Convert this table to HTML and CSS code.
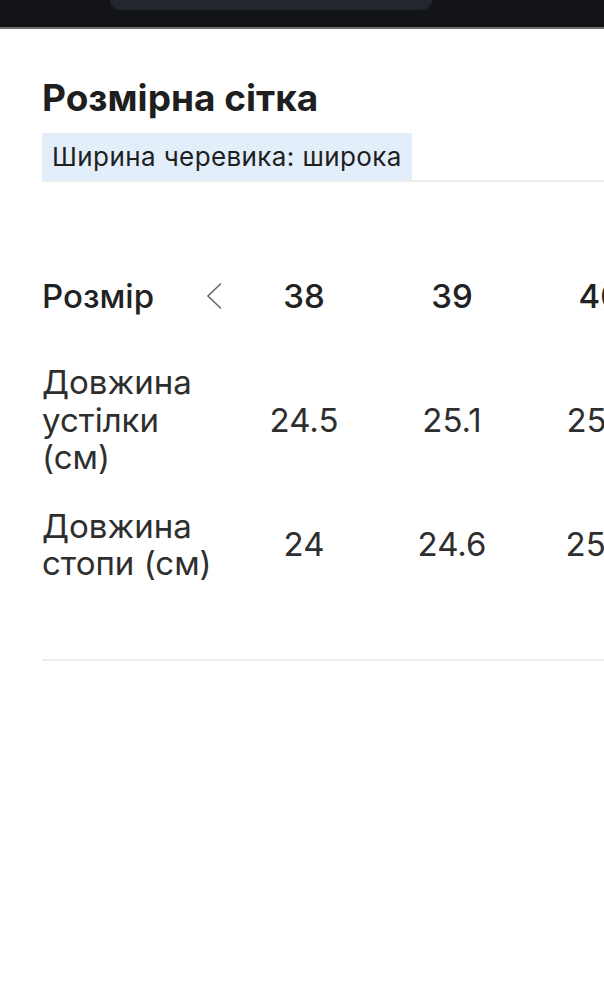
FILE: index.html
```html
<!DOCTYPE html>
<html lang="uk">
<head>
<meta charset="utf-8">
<title>Розмірна сітка</title>
<link rel="stylesheet" href="styles.css">
</head>
<body>
  <div class="topbar">
    <div class="notch"></div>
  </div>
  <div class="topline"></div>
  <main class="content">
    <h1 class="title">Розмірна сітка</h1>
    <div class="tag-row">
      <span class="tag">Ширина черевика: широка</span>
    </div>
    <div class="table-wrap">
      <div class="row head">
        <div class="label">
          <span>Розмір</span>
          <svg class="chev" width="20" height="28" viewBox="0 0 20 28" aria-hidden="true">
            <path d="M17 1.5 L4 14 L17 26.5" fill="none" stroke="#6a6a6a" stroke-width="1.6"/>
          </svg>
        </div>
        <div class="cell">38</div>
        <div class="cell">39</div>
        <div class="cell">40</div>
      </div>
      <div class="row data r1">
        <div class="label">Довжина устілки (см)</div>
        <div class="cell">24.5</div>
        <div class="cell">25.1</div>
        <div class="cell">25.7</div>
      </div>
      <div class="row data r2">
        <div class="label">Довжина стопи (см)</div>
        <div class="cell">24</div>
        <div class="cell">24.6</div>
        <div class="cell">25.2</div>
      </div>
    </div>
    <div class="bottom-rule"></div>
  </main>
</body>
</html>
```
FILE: styles.css
```css
html, body {
  margin: 0;
  padding: 0;
  background: #ffffff;
  overflow: hidden;
}
body {
  width: 604px;
  font-family: "Inter", "Noto Sans", "Liberation Sans", sans-serif;
  color: #262626;
}
.topbar {
  height: 27px;
  background: #131418;
  display: flex;
  justify-content: flex-start;
  overflow: hidden;
}
.notch {
  margin-left: 110px;
  width: 322px;
  height: 10px;
  background: #23262e;
  border-radius: 0 0 22px 22px;
}
.topline {
  height: 2px;
  background: #707070;
}
.content {
  padding-left: 42px;
  overflow: hidden;
}
.title {
  margin: 48px 0 0;
  font-size: 37px;
  line-height: 42px;
  font-weight: 700;
  color: #1f1f1f;
  letter-spacing: 0;
}
.tag-row {
  margin-top: 14px;
  border-bottom: 2px solid #ececec;
  display: flex;
}
.tag {
  background: #e3eefb;
  padding: 0 10px;
  height: 47px;
  line-height: 47px;
  font-size: 26px;
  letter-spacing: 0.4px;
  color: #1f1f1f;
  white-space: nowrap;
}
.table-wrap {
  margin-top: 84px;
  width: 600px;
}
.row {
  display: grid;
  grid-template-columns: 188px repeat(3, 148px);
  align-items: center;
}
.head {
  height: 60px;
  font-size: 33px;
  font-weight: 500;
  color: #222222;
}
.head .label {
  display: flex;
  align-items: center;
  justify-content: space-between;
  padding-right: 6px;
}
.chev {
  display: block;
}
.data {
  font-size: 33px;
  font-weight: 400;
  line-height: 37.5px;
  color: #2e2e2e;
}
.r1 {
  padding-top: 38px;
}
.r2 {
  padding-top: 31px;
}
.label {
  padding-right: 10px;
}
.cell {
  text-align: center;
  white-space: nowrap;
}
.bottom-rule {
  margin-top: 76px;
  height: 2px;
  background: #ececec;
}
```
